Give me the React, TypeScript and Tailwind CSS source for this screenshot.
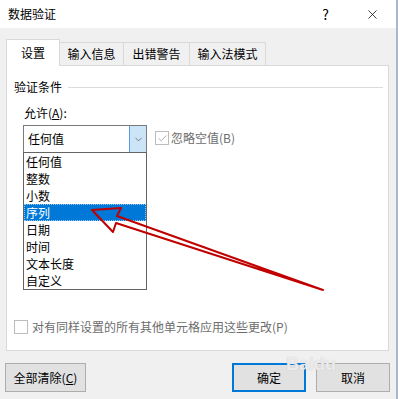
import { X, ChevronDown, Check } from 'lucide-react'

const items = ['任何值', '整数', '小数', '序列', '日期', '时间', '文本长度', '自定义']

const font = { fontFamily: '"Noto Sans CJK SC", "Microsoft YaHei", sans-serif' }

export default function App() {
  return (
    <div
      className="relative w-[398px] h-[399px] bg-[#f0f0f0] flex flex-col text-[12px] text-black border-r-2 border-[#aab8c6] overflow-hidden"
      style={font}
    >
      {/* Title bar */}
      <div className="h-[28px] bg-white flex items-center pl-[8px] shrink-0">
        <span className="leading-[16px]">数据验证</span>
        <span className="ml-auto mr-[36px] text-[14px]">?</span>
        <X className="mr-[16px] w-[15px] h-[15px]" strokeWidth={1.2} />
      </div>

      {/* Tabs */}
      <div className="flex items-end pl-[6px] mt-[10px] h-[27px] shrink-0">
        <div className="w-[54px] h-[27px] bg-white border border-b-0 border-[#d9d9d9] flex items-center justify-center relative z-10 -mb-px pb-px">
          设置
        </div>
        {['输入信息', '出错警告', '输入法模式'].map((t, i) => (
          <div
            key={t}
            className={`h-[23px] bg-[#f0f0f0] border border-l-0 border-b-0 border-[#d9d9d9] flex items-center justify-center ${
              i === 0 ? 'w-[64px]' : i === 1 ? 'w-[66px]' : 'w-[76px]'
            }`}
          >
            {t}
          </div>
        ))}
      </div>

      {/* Panel */}
      <div className="ml-[6px] w-[383px] h-[286px] bg-white border border-[#d9d9d9] shrink-0 flex flex-col relative">
        <div className="flex items-center mt-[13px] pl-[7px] pr-[5px]">
          <span className="leading-[16px]">验证条件</span>
          <div className="flex-1 h-px bg-[#dcdcdc] ml-[6px]" />
        </div>

        <div className="mt-[10px] pl-[17px] leading-[16px]">
          允许(<span className="underline">A</span>):
        </div>

        <div className="flex items-start mt-[4px] pl-[16px]">
          <div className="relative">
            <div className="w-[124px] h-[28px] border border-[#7a7a7a] flex items-center">
              <span className="pl-[4px] flex-1">任何值</span>
              <div className="w-[17px] h-full bg-[#cce4f7] border-l border-[#569de5] flex items-center justify-center">
                <ChevronDown className="w-[11px] h-[11px] text-[#555]" strokeWidth={1.5} />
              </div>
            </div>

            {/* Dropdown list */}
            <div className="absolute left-0 top-[27px] w-[124px] h-[138px] bg-white border border-[#646464] z-20 flex flex-col">
              {items.map((it) => (
                <div
                  key={it}
                  className={`h-[17px] leading-[17px] pl-[2px] ${
                    it === '序列'
                      ? 'bg-[#0078d7] text-white outline-1 outline-dotted outline-[#9cc8ef] -outline-offset-1'
                      : ''
                  }`}
                >
                  {it}
                </div>
              ))}
            </div>
          </div>

          <div className="flex items-center ml-[8px] mt-[4px] text-[#6d6d6d]">
            <div className="w-[14px] h-[14px] border border-[#bcbcbc] flex items-center justify-center">
              <Check className="w-[11px] h-[11px] text-[#a8a8a8]" strokeWidth={2} />
            </div>
            <span className="ml-[2px]">忽略空值(B)</span>
          </div>
        </div>

        <div className="mt-auto mb-[14px] flex items-center pl-[7px] text-[#6d6d6d]">
          <div className="w-[14px] h-[14px] border border-[#bcbcbc] bg-white" />
          <span className="ml-[4px]">对有同样设置的所有其他单元格应用这些更改(P)</span>
        </div>
      </div>

      {/* Buttons */}
      <div className="flex items-center mt-[12px] pl-[5px] shrink-0">
        <button className="w-[81px] h-[29px] bg-[#e1e1e1] border border-[#adadad]">
          全部清除(<span className="underline">C</span>)
        </button>
        <button className="ml-auto w-[74px] h-[29px] bg-[#e1e1e1] border-2 border-[#0078d7]">
          确定
        </button>
        <button className="ml-[10px] mr-[6px] w-[74px] h-[29px] bg-[#e1e1e1] border border-[#adadad]">
          取消
        </button>
      </div>

      {/* Watermark */}
      <div
        className="absolute left-[286px] top-[351px] text-[18px] font-bold text-white/70 pointer-events-none z-30"
        style={{ fontFamily: '"Liberation Sans", sans-serif', textShadow: '0 0 1px #bbb' }}
      >
        Baidu
      </div>

      {/* Red annotation arrow */}
      <svg className="absolute left-0 top-0 z-40 pointer-events-none" width="398" height="399">
        <path
          d="M92 210 L121 208 L117 216 L323 290 L116 223 L113 232 Z"
          fill="none"
          stroke="#c00000"
          strokeWidth="2"
          strokeLinejoin="round"
        />
      </svg>
    </div>
  )
}
